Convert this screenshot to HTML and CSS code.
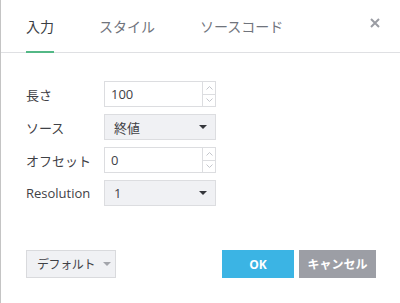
FILE: index.html
```html
<!DOCTYPE html>
<html>
<head>
    <title>インジケーター設定</title>
    <link rel="stylesheet" href="styles.css">
</head>
<body>
    <div class="dialog">
        <div class="tabs">
            <div class="tab active">入力</div>
            <div class="tab">スタイル</div>
            <div class="tab">ソースコード</div>
            <div class="close">
                <svg width="10" height="10" viewBox="0 0 10 10"><path d="M1 1L9 9M9 1L1 9" stroke="#9a9ca3" stroke-width="2"/></svg>
            </div>
        </div>

        <div class="form">
            <div class="row">
                <div class="label">長さ</div>
                <div class="spin">
                    <span class="value">100</span>
                    <div class="arrows">
                        <div class="arrow"><svg width="7" height="4" viewBox="0 0 7 4"><path d="M0.5 3.5L3.5 0.5L6.5 3.5" fill="none" stroke="#c4c6cc"/></svg></div>
                        <div class="arrow"><svg width="7" height="4" viewBox="0 0 7 4"><path d="M0.5 0.5L3.5 3.5L6.5 0.5" fill="none" stroke="#c4c6cc"/></svg></div>
                    </div>
                </div>
            </div>
            <div class="row">
                <div class="label">ソース</div>
                <div class="select">
                    <span class="value">終値</span>
                    <span class="caret"></span>
                </div>
            </div>
            <div class="row">
                <div class="label">オフセット</div>
                <div class="spin">
                    <span class="value">0</span>
                    <div class="arrows">
                        <div class="arrow"><svg width="7" height="4" viewBox="0 0 7 4"><path d="M0.5 3.5L3.5 0.5L6.5 3.5" fill="none" stroke="#c4c6cc"/></svg></div>
                        <div class="arrow"><svg width="7" height="4" viewBox="0 0 7 4"><path d="M0.5 0.5L3.5 3.5L6.5 0.5" fill="none" stroke="#c4c6cc"/></svg></div>
                    </div>
                </div>
            </div>
            <div class="row">
                <div class="label">Resolution</div>
                <div class="select">
                    <span class="value">1</span>
                    <span class="caret"></span>
                </div>
            </div>
        </div>

        <div class="footer">
            <div class="defaults"><span>デフォルト</span><span class="caret light"></span></div>
            <div class="buttons">
                <button class="ok">OK</button>
                <button class="cancel">キャンセル</button>
            </div>
        </div>
    </div>
</body>
</html>
```

FILE: styles.css
```css
body {
    margin: 0;
    font-family: "Open Sans", "Noto Sans CJK JP", sans-serif;
    color: #3f4146;
    background: white;
}
.dialog {
    height: 303px;
    box-sizing: border-box;
    border-left: 1px solid #c4c4c4;
    display: flex;
    flex-direction: column;
}
.tabs {
    display: flex;
    height: 52px;
    padding-left: 25px;
    border-bottom: 1px solid #dfe0e3;
}
.tab {
    height: 51px;
    margin-bottom: -1px;
    margin-right: 45px;
    display: flex;
    align-items: center;
    font-size: 14px;
    color: #70747c;
    border-bottom: 2px solid transparent;
}
.tab.active {
    color: #3b3e44;
    border-bottom-color: #53b886;
}
.close {
    margin-left: auto;
    margin-right: 20px;
    padding-top: 18px;
}
.close svg { display: block; }
.form {
    padding: 28px 0 0 25px;
    display: flex;
    flex-direction: column;
    gap: 7px;
}
.row {
    display: flex;
    align-items: center;
    height: 26px;
}
.label {
    width: 78px;
    font-size: 13px;
}
.spin, .select {
    width: 112px;
    height: 26px;
    box-sizing: border-box;
    border: 1px solid #dcdde0;
    display: flex;
    align-items: center;
    font-size: 13px;
}
.spin .value {
    flex: 1;
    padding-left: 6px;
}
.arrows {
    width: 12px;
    height: 100%;
    border-left: 1px solid #dcdde0;
    display: flex;
    flex-direction: column;
}
.arrow {
    flex: 1;
    display: flex;
    align-items: center;
    justify-content: center;
}
.arrow + .arrow { border-top: 1px solid #dcdde0; }
.select {
    background: #f0f1f4;
    padding: 0 8px 0 9px;
}
.select .value { flex: 1; }
.caret {
    width: 0;
    height: 0;
    border-left: 4px solid transparent;
    border-right: 4px solid transparent;
    border-top: 4px solid #35373c;
}
.caret.light { border-top-color: #a3a5ab; margin-left: 8px; }
.footer {
    margin-top: auto;
    padding: 0 24px 25px 25px;
    display: flex;
    justify-content: space-between;
}
.defaults {
    width: 90px;
    height: 28px;
    box-sizing: border-box;
    border: 1px solid #d9dadd;
    background: #f0f1f4;
    display: flex;
    align-items: center;
    padding-left: 10px;
    font-size: 12px;
    letter-spacing: -0.4px;
}
.buttons {
    display: flex;
    gap: 5px;
}
button {
    height: 28px;
    border: none;
    color: white;
    font-family: inherit;
    font-weight: bold;
    font-size: 12px;
    padding: 0;
    cursor: pointer;
}
.ok { width: 72px; background: #3bb4e4; }
.cancel { width: 77px; background: #9c9ea5; }
```
